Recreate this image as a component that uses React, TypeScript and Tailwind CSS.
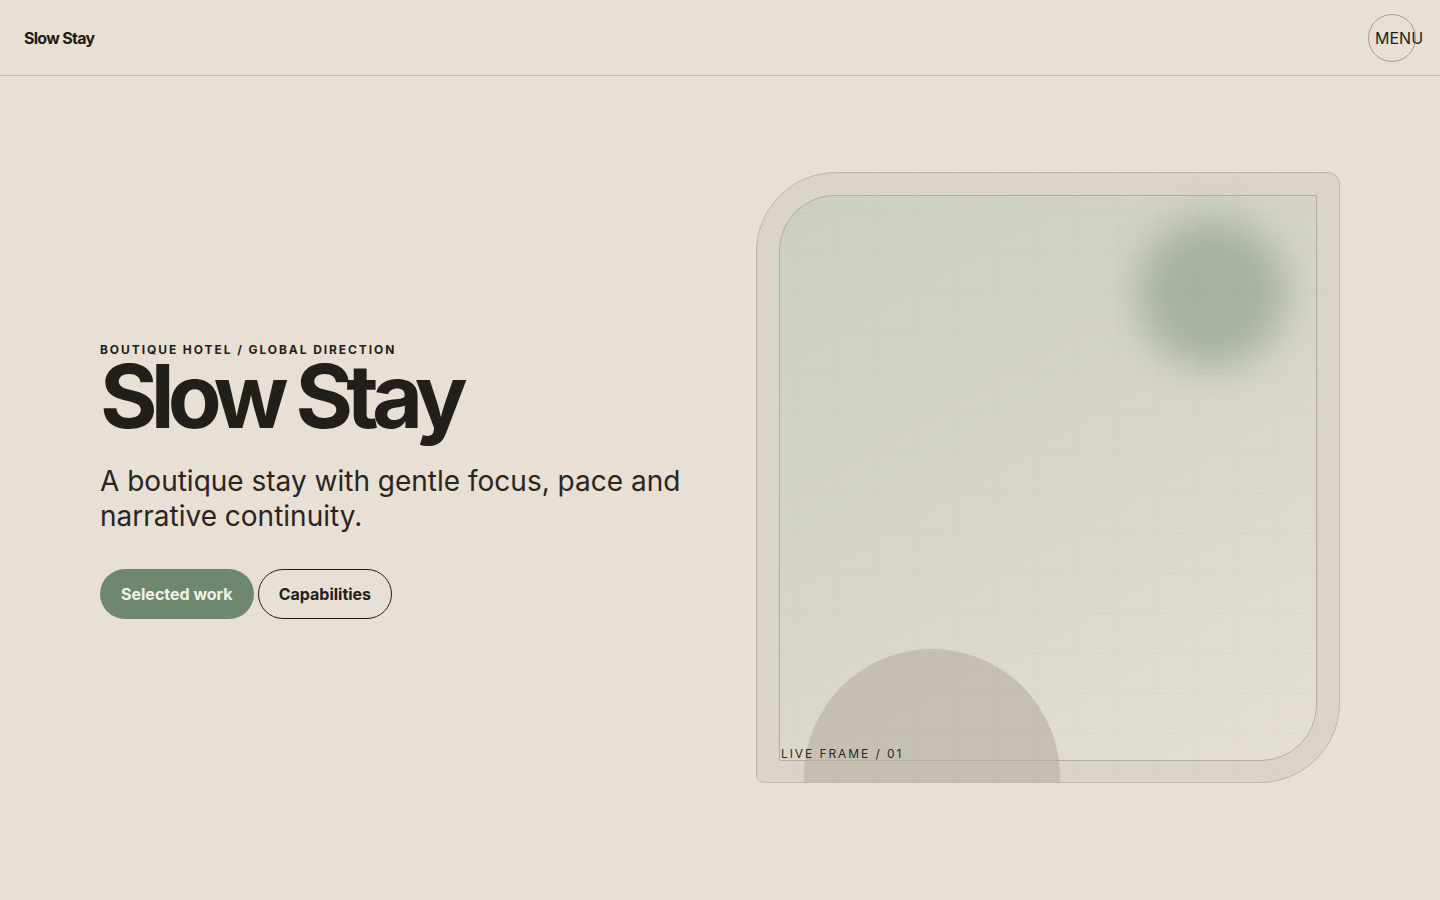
import React from "react";

function Header() {
  return (
    <header className="flex h-[76px] items-center justify-between border-b border-[#c9c0b3] px-6">
      <a className="text-base font-bold leading-5 tracking-[-0.045em] text-[#1f1b17]" href="#">
        Slow Stay
      </a>
      <button className="flex h-12 w-12 items-center justify-start rounded-full border border-[#a39b90] pl-[6px] text-base text-[#221e1a]">
        MENU
      </button>
    </header>
  );
}

function LiveFrame() {
  return (
    <div className="relative h-[611px] w-full overflow-hidden rounded-[80px_12px_80px_8px] border border-[#bfb7aa] bg-[#dbd5c9]">
      {/* inner tint */}
      <div className="absolute bottom-[21px] left-[22px] right-[22px] top-[22px] rounded-[56px_2px_56px_2px] bg-[linear-gradient(150deg,#cccfbf_0%,#d6d5c7_45%,#e5dfd4_100%)]" />
      {/* green glow */}
      <div className="absolute left-[380px] top-[45px] h-[150px] w-[150px] rounded-full bg-[#93a58e] opacity-70 blur-[18px]" />
      {/* half circle */}
      <div className="absolute left-[47px] top-[476px] h-[256px] w-[256px] rounded-full bg-[#bfb9ad] opacity-80" />
      {/* grid */}
      <div className="absolute inset-0 bg-[linear-gradient(to_right,rgba(95,85,65,0.04)_1px,transparent_1px),linear-gradient(to_bottom,rgba(95,85,65,0.04)_1px,transparent_1px)] bg-[size:40px_40px]" />
      {/* frame line */}
      <div className="absolute bottom-[21px] left-[22px] right-[22px] top-[22px] rounded-[56px_2px_56px_2px] border border-[#b3ada0]" />
      <span className="absolute bottom-[22px] left-[24px] text-xs leading-3 tracking-[0.16em] text-[#2c2722]">
        LIVE FRAME / 01
      </span>
    </div>
  );
}

export default function App() {
  return (
    <div className="min-h-[900px] bg-[#e8e0d5] font-['Inter',sans-serif] text-[#221e1a]">
      <Header />
      <main className="grid grid-cols-2 items-center gap-[72px] px-[100px] pt-[96px]">
        <section className="flex flex-col pt-[6px]">
          <p className="text-xs font-bold tracking-[0.16em] text-[#221e1a]">
            BOUTIQUE HOTEL / GLOBAL DIRECTION
          </p>
          <h1 className="mt-[1px] text-[88px] font-bold leading-[0.86] tracking-[-0.078em] text-[#221e1a]">
            Slow Stay
          </h1>
          <p className="mt-[29px] text-[28px] leading-[35px] text-[#2a241f]">
            A boutique stay with gentle focus, pace and narrative continuity.
          </p>
          <div className="mt-[35px] flex gap-1">
            <button className="h-[50px] rounded-full bg-[#6e8870] px-[21px] text-base font-bold text-[#f5f1ea]">
              Selected work
            </button>
            <button className="h-[50px] rounded-full border border-[#221e1a] px-5 text-base font-bold text-[#221e1a]">
              Capabilities
            </button>
          </div>
        </section>
        <LiveFrame />
      </main>
    </div>
  );
}
